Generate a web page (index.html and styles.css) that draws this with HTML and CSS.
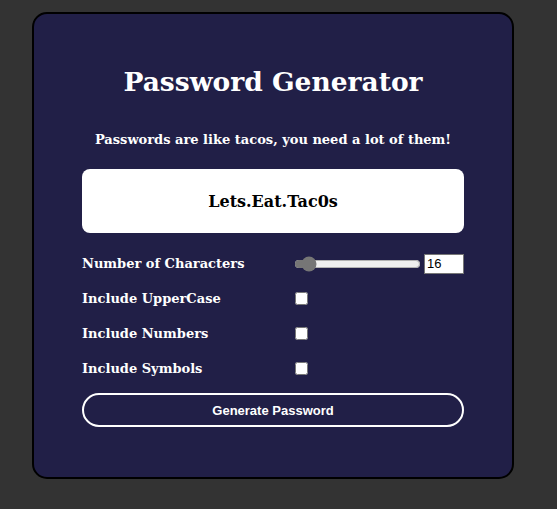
FILE: index.html
```html
<!DOCTYPE html>
<html>
<head>
<meta charset="utf-8">
<link rel="stylesheet" href="styles.css">
</head>
<body>
<div class="card">
  <h1 class="title">Password Generator</h1>
  <p class="subtitle">Passwords are like tacos, you need a lot of them!</p>
  <div class="output">Lets.Eat.Tac0s</div>
  <div class="row first">
    <label class="label">Number of Characters</label>
    <input class="range" type="range" min="8" max="128" value="16">
    <input class="num" type="number" value="16">
  </div>
  <div class="row">
    <label class="label">Include UpperCase</label>
    <input class="check" type="checkbox">
  </div>
  <div class="row">
    <label class="label">Include Numbers</label>
    <input class="check" type="checkbox">
  </div>
  <div class="row">
    <label class="label">Include Symbols</label>
    <input class="check" type="checkbox">
  </div>
  <button class="btn">Generate Password</button>
</div>
</body>
</html>
```
FILE: styles.css
```css
html, body {
  margin: 0;
  padding: 0;
  background: #333333;
}
body {
  padding: 12px 0 0 32px;
  font-family: "DejaVu Serif", "Liberation Serif", serif;
}
.card {
  width: 382px;
  padding: 20px 48px 50px;
  background: #211f47;
  border: 2px solid #000;
  border-radius: 15px;
  color: #fff;
}
.title {
  margin: 30px 0 0;
  text-align: center;
  font-size: 26.5px;
  line-height: 36px;
  font-weight: bold;
}
.subtitle {
  margin: 31px 0 0;
  text-align: center;
  font-size: 13px;
  line-height: 18px;
  font-weight: bold;
}
.output {
  margin-top: 20px;
  height: 64px;
  background: #fff;
  border-radius: 8px;
  color: #000;
  display: flex;
  align-items: center;
  justify-content: center;
  font-size: 16px;
  font-weight: bold;
}
.row {
  display: flex;
  align-items: center;
  height: 35px;
}
.row.first { margin-top: 13px; }
.label {
  width: 210px;
  font-size: 13px;
  font-weight: bold;
}
.range {
  width: 127px;
  margin: 0 2px;
  accent-color: #767676;
}
.num {
  width: 34px;
  height: 18px;
  padding: 0 2px;
  margin: 0 0 0 1px;
  border: 1px solid #767676;
  font-family: Arial, "Liberation Sans", sans-serif;
  font-size: 13px;
}
.check {
  margin: 0 0 0 3px;
  width: 13px;
  height: 13px;
}
.btn {
  display: block;
  width: 100%;
  height: 34px;
  margin-top: 7px;
  background: transparent;
  border: 2px solid #fff;
  border-radius: 17px;
  color: #fff;
  font-family: Arial, "Liberation Sans", sans-serif;
  font-size: 13px;
  font-weight: bold;
}
```
